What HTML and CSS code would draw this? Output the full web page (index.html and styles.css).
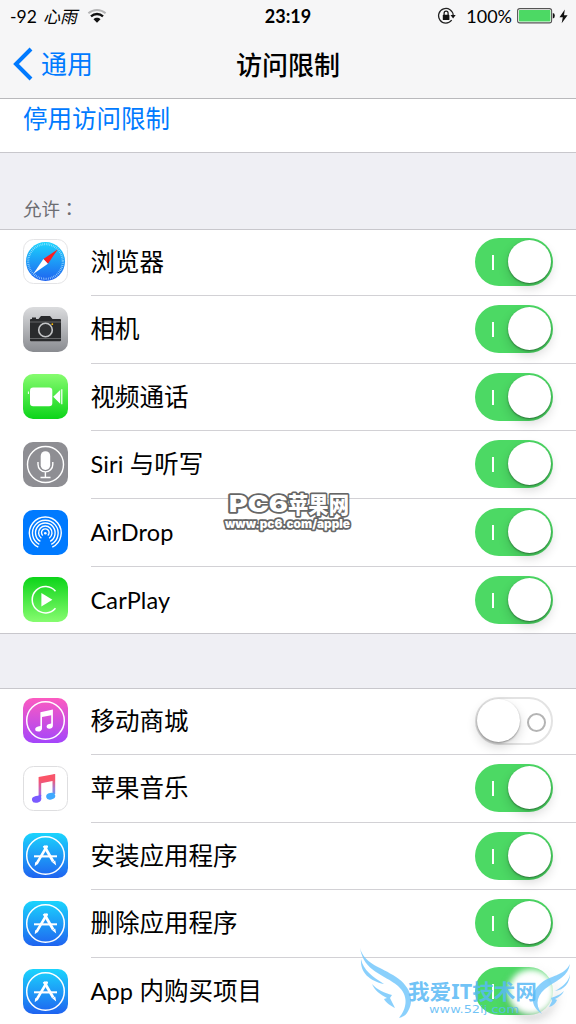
FILE: index.html
```
<!DOCTYPE html>
<html lang="zh-CN"><head>
<meta charset="utf-8">
<title>访问限制</title>
<link rel="stylesheet" href="styles.css">
</head><body>
<svg class="defs" width="0" height="0">
<defs>
<linearGradient id="blue" x2="0" y2="1"><stop offset="0" stop-color="#1bd4fd"/><stop offset="1" stop-color="#1f63f0"/></linearGradient>
<linearGradient id="grey" x2="0" y2="1"><stop offset="0" stop-color="#dbdcde"/><stop offset="1" stop-color="#898b90"/></linearGradient>
<linearGradient id="green" x2="0" y2="1"><stop offset="0" stop-color="#86fc6f"/><stop offset="1" stop-color="#0cd419"/></linearGradient>
<linearGradient id="green-up" x2="0" y2="1"><stop offset="0" stop-color="#0cd419"/><stop offset="1" stop-color="#86fc6f"/></linearGradient>
<linearGradient id="pink" x2="0" y2="1"><stop offset="0" stop-color="#fc5bc0"/><stop offset="1" stop-color="#a445fb"/></linearGradient>
<linearGradient id="note-l" gradientUnits="userSpaceOnUse" x1="0" y1="8" x2="0" y2="37"><stop offset=".2" stop-color="#fa5468"/><stop offset=".6" stop-color="#c065c8"/><stop offset="1" stop-color="#7658ff"/></linearGradient>
<linearGradient id="note-r" gradientUnits="userSpaceOnUse" x1="0" y1="8" x2="0" y2="37"><stop offset=".2" stop-color="#f5566e"/><stop offset=".5" stop-color="#a37bd4"/><stop offset=".85" stop-color="#3fa9ff"/></linearGradient>
<g id="store">
<rect width="45" height="45" rx="10" fill="url(#blue)"/>
<circle cx="22.5" cy="22.5" r="18.8" fill="none" stroke="#fff" stroke-width="1.5"/>
<path d="M11 23.300h23" stroke="#fff" stroke-width="2"/>
<path d="M22.500 16l-5 8.300h9.600z" fill="#2599f7"/>
<path d="M23.800 13.500L14 30" stroke="#fff" stroke-width="2.500" stroke-linecap="round"/>
<path d="M21 12.800L30.200 28.500" stroke="#fff" stroke-width="2.800"/>
<path d="M19 23.300h7" stroke="#fff" stroke-width="2"/>
<path d="M29.200 29.300l3-1.700 1 5zM12.200 29l2.800 1.700-3.300 2.500z" fill="#fff"/>
</g>
</defs>
</svg>

<header class="header">
<div class="status">
<div class="status-left"><span class="signal">-92</span><span class="carrier">心雨</span>
<svg class="wifi" width="20" height="16" viewBox="0 0 20 16" fill="none">
<path d="M1.400 5.200C6.300 .8 13.700 .8 18.600 5.200" stroke="#b5b5b6" stroke-width="2"/>
<path d="M4 8.300c3.400-3.100 8.600-3.100 12 0" stroke="#111" stroke-width="2.300"/>
<path d="M6.500 11.200C8.500 9.300 11.500 9.300 13.500 11.200L10 14.700z" fill="#111"/>
</svg></div>
<div class="time">23:19</div>
<div class="status-right">
<svg width="20" height="18" viewBox="0 0 20 18">
<path d="M14.700 13.200A7.300 7.300 0 1 1 16.200 8.500" fill="none" stroke="#222" stroke-width="1.300"/>
<path d="M13.500 8h5.200l-2.600 3.400z" fill="#111"/>
<rect x="5.800" y="7.800" width="6.600" height="5.200" rx=".6" fill="#111"/>
<path d="M7.100 8V6.200a2 2 0 0 1 4 0V8" fill="none" stroke="#111" stroke-width="1.200"/>
</svg>
<span class="percent">100%</span>
<svg width="38" height="16" viewBox="0 0 38 16">
<rect x=".6" y=".6" width="34" height="14.300" rx="2.200" fill="#fff" stroke="#555" stroke-width="1.100"/>
<rect x="1.900" y="1.900" width="31.500" height="11.700" rx=".8" fill="#4cd964"/>
<path d="M35.800 5q2 .3 2 2.800t-2 2.800z" fill="#111"/>
</svg>
<svg class="bolt" width="9" height="15" viewBox="0 0 9 15"><path d="M5.800 .5L.5 8.200h3.300L2.700 14.200 8.600 6.200H5z" fill="#111"/></svg>
</div>
</div>
<nav class="nav">
<a class="back"><svg width="20" height="34" viewBox="0 0 20 34"><path d="M18 2L3 17l15 15" fill="none" stroke="#007aff" stroke-width="4"/></svg>通用</a>
<h1 class="title">访问限制</h1>
</nav>
</header>

<main>
<div class="disable">停用访问限制</div>
<h2 class="caption">允许<span class="colon" lang="zh-TW">：</span></h2>

<ul class="group">
<li class="row">
<svg class="icon" viewBox="0 0 45 45">
<rect x=".5" y=".5" width="44" height="44" rx="10" fill="#fff" stroke="#e4e4e6"/>
<circle cx="22.500" cy="22.500" r="19.500" fill="url(#blue)"/>
<circle cx="22.500" cy="22.500" r="17.300" fill="none" stroke="#c3ecff" stroke-opacity=".75" stroke-width="2.200" stroke-dasharray=".7 1.110"/>
<path d="M34.900 10.200L20.400 20l4.500 4.700z" fill="#fb1d22"/>
<path d="M10.200 35L20.400 20l4.500 4.700z" fill="#fff"/>
</svg>
<div class="cell"><span class="name">浏览器</span><span class="switch"></span></div>
</li>
<li class="row">
<svg class="icon" viewBox="0 0 45 45">
<rect width="45" height="45" rx="10" fill="url(#grey)"/>
<path d="M9 12v-1.500h4V12h2.500l2.500-3h9l2.500 3H37a1 1 0 0 1 1 1v20.200a1 1 0 0 1-1 1H8a1 1 0 0 1-1-1V13a1 1 0 0 1 1-1z" fill="#292a2c"/>
<path d="M7 15h31M7 31.500h31" stroke="#6b6c6e" stroke-width=".9"/>
<circle cx="22.500" cy="23" r="6.800" fill="#303133" stroke="#c4c5c7" stroke-width="1.600"/>
<circle cx="29.300" cy="17.200" r=".9" fill="#fb0"/>
</svg>
<div class="cell"><span class="name">相机</span><span class="switch"></span></div>
</li>
<li class="row">
<svg class="icon" viewBox="0 0 45 45">
<rect width="45" height="45" rx="10" fill="url(#green)"/>
<rect x="7" y="13.500" width="22.300" height="18.800" rx="3.200" fill="#fff"/>
<path d="M30.200 22.800l7-6.800v13.800zM38.200 15.200h1.200v15h-1.200zM4.900 17.500h1v2.500h-1z" fill="#fff"/>
</svg>
<div class="cell"><span class="name">视频通话</span><span class="switch"></span></div>
</li>
<li class="row">
<svg class="icon" viewBox="0 0 45 45">
<rect width="45" height="45" rx="10" fill="#8e8e93"/>
<g fill="none" stroke="#fff" stroke-width="1.400">
<circle cx="22.500" cy="22.500" r="18"/>
<path d="M15 20v2.500a7.400 7.400 0 0 0 14.800 0V20M22.400 30v5M17.500 35.500h10"/>
</g>
<rect x="17.700" y="9.200" width="9.500" height="18.800" rx="4.700" fill="#fff"/>
</svg>
<div class="cell"><span class="name"><span class="latin">Siri</span> 与听写</span><span class="switch"></span></div>
</li>
<li class="row">
<svg class="icon" viewBox="0 0 45 45">
<rect width="45" height="45" rx="10" fill="#007aff"/>
<g fill="none" stroke="#fff" stroke-width="1.400">
<path d="M15.300 37.200A15.900 15.900 0 1 1 29.300 37.200"/>
<path d="M16.300 34.300A12.800 12.800 0 1 1 28.300 34.300"/>
<path d="M17.400 31.300A9.800 9.800 0 1 1 27.200 31.300"/>
<path d="M18.400 28.200A6.700 6.700 0 1 1 26.200 28.200"/>
<path d="M19.800 25.500A3.800 3.800 0 1 1 24.800 25.500"/>
</g>
<circle cx="22.300" cy="23.200" r="1.300" fill="#fff"/>
<path d="M22.300 25.500L15.500 40h13.600z" fill="#007aff"/>
</svg>
<div class="cell"><span class="name"><span class="latin">AirDrop</span></span><span class="switch"></span></div>
</li>
<li class="row">
<svg class="icon" viewBox="0 0 45 45">
<rect width="45" height="45" rx="10" fill="url(#green-up)"/>
<path d="M32.500 14.200A13.200 13.200 0 1 0 32.500 31.200" fill="none" stroke="#fff" stroke-width="1.500"/>
<path d="M18.400 16v13.600l11-6.800z" fill="#fff"/>
</svg>
<div class="cell"><span class="name"><span class="latin">CarPlay</span></span><span class="switch"></span></div>
</li>
</ul>

<ul class="group">
<li class="row">
<svg class="icon" viewBox="0 0 45 45">
<rect width="45" height="45" rx="10" fill="url(#pink)"/>
<circle cx="22.500" cy="22.500" r="18.800" fill="none" stroke="#fff" stroke-width="1.500"/>
<path d="M17.400 14.300l12.500-2.700v16.200c0 2-1.700 3-3.600 3s-2.700-1-2.700-2.200c0-1.800 1.600-2.600 4.600-3.100v-8.300l-9.200 1.900v11.300c0 2-1.700 3.200-3.800 3.200s-3-1-3-2.300c0-1.800 1.500-2.500 5.200-3.200z" fill="#fff"/>
</svg>
<div class="cell"><span class="name">移动商城</span><span class="switch off"></span></div>
</li>
<li class="row">
<svg class="icon" viewBox="0 0 45 45">
<rect x=".5" y=".5" width="44" height="44" rx="10" fill="#fff" stroke="#dedee0"/>
<path d="M15.600 11v19.500l2.600-.5V17.200L32 14.500V8z" fill="url(#note-l)"/>
<path d="M29.500 9v19h2.700V8z" fill="url(#note-r)"/>
<ellipse cx="13.600" cy="33.300" rx="4.700" ry="3.400" transform="rotate(-12 13.600 33.300)" fill="#7a5aff"/>
<ellipse cx="27.700" cy="30.300" rx="4.600" ry="3.300" transform="rotate(-12 27.700 30.300)" fill="#3fa9ff"/>
<path d="M15.600 29h2.600v4h-2.600z" fill="#7a5aff"/>
</svg>
<div class="cell"><span class="name">苹果音乐</span><span class="switch"></span></div>
</li>
<li class="row">
<svg class="icon" viewBox="0 0 45 45"><use href="#store"/></svg>
<div class="cell"><span class="name">安装应用程序</span><span class="switch"></span></div>
</li>
<li class="row">
<svg class="icon" viewBox="0 0 45 45"><use href="#store"/></svg>
<div class="cell"><span class="name">删除应用程序</span><span class="switch"></span></div>
</li>
<li class="row">
<svg class="icon" viewBox="0 0 45 45"><use href="#store"/></svg>
<div class="cell"><span class="name"><span class="latin">App</span> 内购买项目</span><span class="switch smudged"></span></div>
</li>
</ul>
</main>

<svg class="mark mark-pc6" width="140" height="50" viewBox="0 0 140 50">
<text x="9" y="22" font-size="23" textLength="59" lengthAdjust="spacingAndGlyphs">PC6</text>
<text x="68" y="22.500" font-size="23" textLength="61" lengthAdjust="spacingAndGlyphs">苹果网</text>
<text class="url" x="5" y="38" font-size="12" textLength="125" lengthAdjust="spacingAndGlyphs">www.pc6.com/apple</text>
</svg>
<svg class="mark mark-52ij" width="236" height="94" viewBox="0 0 236 94">
<g fill="#76c8fb">
<path d="M20 18c4 15 18 18 33 27 17 10 23 25 14 38-2 3-5 4-8 5 8-10 10-22-1-32C44 44 24 42 20 18z"/>
<path d="M21 29c2 11 12 18 23 25C30 51 20 43 21 29z"/>
<path d="M32 54c5 6 13 9 20 11l-2 3 5 10c-4-2-9-5-11-9l3-1c-6-3-12-7-15-14z"/>
<path d="M230 34c-2 12-12 16-21 22-12 8-15 18-7 28-11-7-13-20-2-30 10-9 24-8 30-20z"/>
<path d="M230 44c-1 8-8 13-15 17 9-1 15-8 15-17z"/>
<path d="M224 61c-4 4-8 5-13 7l1 3-3 6c4-1 7-4 8-7l-2-1c4-2 7-4 9-8z"/>
</g>
<text x="68" y="69" font-size="21" textLength="129" lengthAdjust="spacingAndGlyphs">我爱IT技术网</text>
<text class="url" x="89" y="83" font-size="11" textLength="90" lengthAdjust="spacingAndGlyphs">www.52ij.com</text>
</svg>
</body></html>
```
FILE: styles.css
```
* {
	box-sizing: border-box;
}

body {
	margin: 0;
	height: 1024px;
	overflow: hidden;
	position: relative;
	background: #efeff4;
	color: #000;
	font-family: Lato, "Noto Sans CJK SC", sans-serif;
}

main {
	height: 925px;
	overflow: hidden;
}

.defs {
	display: block;
}

.header {
	height: 99px;
	background: #f6f6f7;
	border-bottom: 1px solid #b9b9bc;
}

.status {
	height: 32px;
	padding: 0 8px 0 10px;
	display: grid;
	grid-template-columns: 1fr auto 1fr;
	align-items: center;
}

.status-left,
.status-right {
	display: flex;
	align-items: center;
}

.status-right {
	justify-content: flex-end;
}

.signal {
	font-size: 17.5px;
	width: 33px;
}

.carrier {
	font: italic 17px/20px "Noto Sans CJK SC", sans-serif;
	width: 44px;
}

.time {
	font-size: 18px;
	font-weight: bold;
	margin-right: 2px;
}

.percent {
	font-size: 18px;
	margin: 0 5px 0 9px;
}

.bolt {
	margin-left: 4px;
}

.nav {
	height: 66px;
	padding-left: 13px;
	display: grid;
	grid-template-columns: 1fr auto 1fr;
	align-items: center;
}

.back {
	display: flex;
	align-items: center;
	gap: 8px;
	color: #007aff;
	font-size: 26px;
	line-height: 34px;
	margin-top: -3px;
}

.title {
	margin: -3px 13px 0 0;
	font-size: 26px;
	font-weight: 500;
}

.disable {
	height: 54px;
	padding-left: 23px;
	background: #fff;
	border-bottom: 1px solid #c8c7cc;
	color: #007aff;
	font-size: 24.5px;
	line-height: 39px;
}

.caption {
	height: 76px;
	margin: 0;
	padding: 42px 0 0 23px;
	color: #6d6d72;
	font-size: 18.5px;
	font-weight: normal;
	line-height: 27px;
}

.colon {
	font-family: "Noto Sans CJK TC", sans-serif;
}

.group {
	margin: 0 0 54px;
	padding: 0;
	list-style: none;
	background: #fff;
	border: 1px solid #c8c7cc;
	border-width: 1px 0;
}

.row {
	height: 67.6px;
	padding-left: 23px;
	display: flex;
}

.row:first-child {
	height: 66.2px;
	margin-top: 0;
}

.row:last-child {
	height: 66.5px;
}

.icon {
	width: 45px;
	height: 45px;
	margin-top: 10.6px;
	flex: none;
}

.row:first-child .icon {
	margin-top: 9.4px;
}

.cell {
	flex: 1;
	margin-left: 22.5px;
	padding: 1px 23px 0 0;
	display: flex;
	align-items: flex-start;
	justify-content: space-between;
	border-bottom: 1px solid #d2d1d5;
}

.row:first-child .cell {
	padding-top: 0;
}

.row:last-child .cell {
	border-bottom: 0;
}

.name {
	font-size: 24.5px;
	line-height: 64px;
}

.latin {
	font-size: 23.5px;
	letter-spacing: .15px;
}

.switch {
	position: relative;
	width: 78px;
	height: 48px;
	margin-top: 8px;
	border-radius: 24px;
	background: #4cd964;
}

/* the I mark of the on state */
.switch::before {
	content: "";
	position: absolute;
	left: 17px;
	top: 17px;
	width: 1.5px;
	height: 15px;
	background: #fff;
}

.switch::after {
	content: "";
	position: absolute;
	right: 2px;
	top: 2px;
	width: 43px;
	height: 43px;
	border-radius: 50%;
	background: #fff;
	box-shadow: 0 1px 2px rgba(0, 0, 0, .4), 0 5px 11px rgba(0, 0, 0, .16);
}

.switch.off {
	background: #fff;
	border: 2px solid #e3e3e3;
}

.switch.off::before {
	left: 50px;
	top: 14px;
	width: 15px;
	height: 15px;
	border: 2px solid #b4b4b4;
	border-radius: 50%;
	background: none;
}

.switch.off::after {
	left: 0;
	top: 0;
}

.switch.smudged::after {
	right: -2px;
	width: 47px;
	height: 46px;
	filter: blur(3px);
}

.mark {
	position: absolute;
}

.mark-pc6 {
	left: 220px;
	top: 490px;
	font-family: Inter, "Noto Sans CJK SC", sans-serif;
	font-weight: 900;
	fill: #fff;
	stroke: #666;
	stroke-width: 3.5px;
	stroke-linejoin: round;
	paint-order: stroke;
}

.mark-52ij {
	left: 340px;
	top: 930px;
	font-family: "Noto Sans", "Noto Sans CJK SC", sans-serif;
	font-weight: bold;
	fill: #59b9f5;
	fill-opacity: .85;
}

.mark-52ij .url {
	font-family: "DejaVu Sans", sans-serif;
	font-weight: normal;
}
```
